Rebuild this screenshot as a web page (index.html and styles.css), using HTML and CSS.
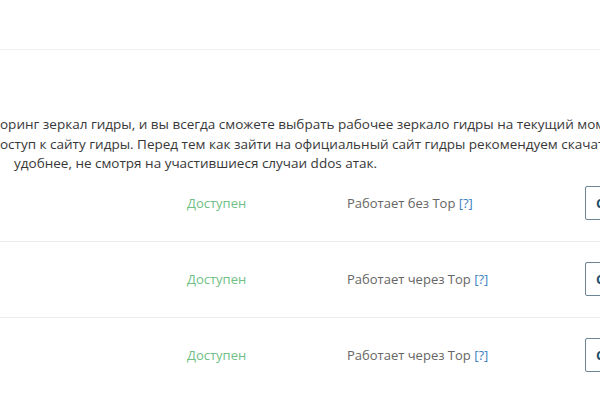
FILE: index.html
```html
<!DOCTYPE html>
<html lang="ru">
<head>
<meta charset="utf-8">
<link rel="stylesheet" href="styles.css">
</head>
<body>
<div class="page">
  <header class="topbar"></header>
  <section class="intro">
    <p class="line">оринг зеркал гидры, и вы всегда сможете выбрать рабочее зеркало гидры на текущий момент</p>
    <p class="line">оступ к сайту гидры. Перед тем как зайти на официальный сайт гидры рекомендуем скачать</p>
    <p class="line indent">удобнее, не смотря на участившиеся случаи ddos атак.</p>
  </section>
  <div class="table">
    <div class="row">
      <span class="cell name"></span>
      <span class="cell status">Доступен</span>
      <span class="cell mode">Работает без Тор <a class="help">[?]</a></span>
      <span class="cell action"><span class="btn">Скопировать</span></span>
    </div>
    <div class="row">
      <span class="cell name"></span>
      <span class="cell status">Доступен</span>
      <span class="cell mode">Работает через Тор <a class="help">[?]</a></span>
      <span class="cell action"><span class="btn">Скопировать</span></span>
    </div>
    <div class="row">
      <span class="cell name"></span>
      <span class="cell status">Доступен</span>
      <span class="cell mode">Работает через Тор <a class="help">[?]</a></span>
      <span class="cell action"><span class="btn">Скопировать</span></span>
    </div>
  </div>
</div>
</body>
</html>
```
FILE: styles.css
```css
html, body {
  margin: 0;
  padding: 0;
  background: #ffffff;
  overflow: hidden;
}
body {
  width: 600px;
  height: 400px;
  font-family: "Open Sans", "Noto Sans", sans-serif;
  color: #3a3a3a;
}
.page {
  width: 800px;
}
.topbar {
  height: 49px;
  border-bottom: 1px solid #f0f0f0;
}
.intro {
  padding-top: 65px;
}
.line {
  margin: 0;
  font-size: 13.5px;
  line-height: 19.5px;
  white-space: nowrap;
  color: #383838;
}
.indent {
  padding-left: 14px;
}
.table {
  margin-top: -8px;
}
.row {
  display: flex;
  align-items: center;
  height: 75px;
  border-bottom: 1px solid #ececec;
  font-size: 13px;
}
.row:last-child {
  border-bottom: none;
}
.name {
  width: 187px;
}
.status {
  width: 160px;
  color: #70bf85;
}
.mode {
  width: 238px;
  color: #666666;
}
.help {
  color: #3d7fc0;
}
.btn {
  display: inline-flex;
  align-items: center;
  height: 32px;
  padding: 0 10px;
  border: 1px solid #6c8494;
  border-radius: 2px;
  color: #1f4f6e;
  font-weight: 700;
}
```
